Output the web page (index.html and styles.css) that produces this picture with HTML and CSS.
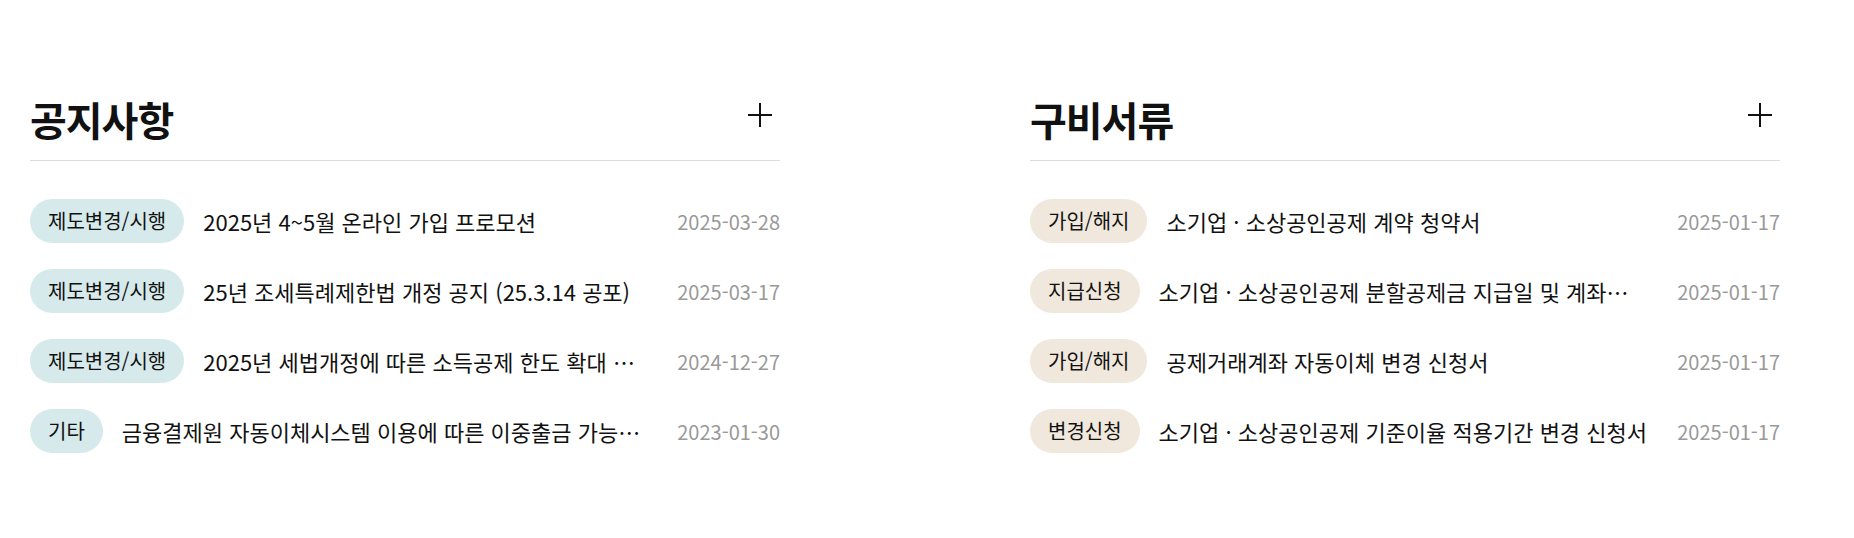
FILE: index.html
```html
<!DOCTYPE html>
<html lang="ko">

<head>
    <meta charset="UTF-8">
    <meta name="viewport" content="width=device-width, initial-scale=1.0">
    <title>공지사항 / 구비서류</title>
    <link rel="stylesheet" href="styles.css">
</head>

<body>
    <div class="board">
        <!-- 공지사항 -->
        <section class="panel">
            <div class="panel-head">
                <h2>공지사항</h2>
                <a href="#" class="more" aria-label="더보기">
                    <svg width="24" height="24" viewBox="0 0 24 24"><path d="M12 0v24M0 12h24" stroke="#111" stroke-width="2" fill="none"/></svg>
                </a>
            </div>
            <ul class="list">
                <li class="item">
                    <span class="tag tag-blue">제도변경/시행</span>
                    <a href="#" class="subject">2025년 4~5월 온라인 가입 프로모션</a>
                    <span class="date">2025-03-28</span>
                </li>
                <li class="item">
                    <span class="tag tag-blue">제도변경/시행</span>
                    <a href="#" class="subject">25년 조세특례제한법 개정 공지 (25.3.14 공포)</a>
                    <span class="date">2025-03-17</span>
                </li>
                <li class="item">
                    <span class="tag tag-blue">제도변경/시행</span>
                    <a href="#" class="subject">2025년 세법개정에 따른 소득공제 한도 확대 안내 및 적용 기준</a>
                    <span class="date">2024-12-27</span>
                </li>
                <li class="item">
                    <span class="tag tag-blue">기타</span>
                    <a href="#" class="subject">금융결제원 자동이체시스템 이용에 따른 이중출금 가능성 안내</a>
                    <span class="date">2023-01-30</span>
                </li>
            </ul>
        </section>

        <!-- 구비서류 -->
        <section class="panel">
            <div class="panel-head">
                <h2>구비서류</h2>
                <a href="#" class="more" aria-label="더보기">
                    <svg width="24" height="24" viewBox="0 0 24 24"><path d="M12 0v24M0 12h24" stroke="#111" stroke-width="2" fill="none"/></svg>
                </a>
            </div>
            <ul class="list">
                <li class="item">
                    <span class="tag tag-beige">가입/해지</span>
                    <a href="#" class="subject">소기업 · 소상공인공제 계약 청약서</a>
                    <span class="date">2025-01-17</span>
                </li>
                <li class="item">
                    <span class="tag tag-beige">지급신청</span>
                    <a href="#" class="subject">소기업 · 소상공인공제 분할공제금 지급일 및 계좌변경 신청서</a>
                    <span class="date">2025-01-17</span>
                </li>
                <li class="item">
                    <span class="tag tag-beige">가입/해지</span>
                    <a href="#" class="subject">공제거래계좌 자동이체 변경 신청서</a>
                    <span class="date">2025-01-17</span>
                </li>
                <li class="item">
                    <span class="tag tag-beige">변경신청</span>
                    <a href="#" class="subject">소기업 · 소상공인공제 기준이율 적용기간 변경 신청서</a>
                    <span class="date">2025-01-17</span>
                </li>
            </ul>
        </section>
    </div>
</body>

</html>
```

FILE: styles.css
```css
/* 기본 */
body {
    margin: 0;
    padding: 0;
    background-color: #ffffff;
    font-family: "Noto Sans CJK KR", "Noto Sans", sans-serif;
    color: #111;
}

a {
    color: inherit;
    text-decoration: none;
}

/* 두 칸 게시판 */
.board {
    display: flex;
    gap: 250px;
    padding: 93px 74px 0 30px;
}

.panel {
    width: 750px;
}

/* 제목 + 더보기 */
.panel-head {
    display: flex;
    justify-content: space-between;
    align-items: flex-start;
    padding-bottom: 15px;
    border-bottom: 1px solid #dddddd;
}

.panel-head h2 {
    margin: 0;
    font-size: 40px;
    line-height: 52px;
    font-weight: 700;
    letter-spacing: -1px;
}

.more {
    display: flex;
    align-items: center;
    justify-content: center;
    width: 40px;
    height: 40px;
    margin-top: 2px;
}

/* 목록 */
.list {
    list-style: none;
    margin: 0;
    padding: 38px 0 0;
    display: flex;
    flex-direction: column;
    gap: 26px;
}

.item {
    display: flex;
    align-items: center;
    height: 44px;
}

.tag {
    flex-shrink: 0;
    height: 44px;
    line-height: 44px;
    padding: 0 18px;
    border-radius: 22px;
    font-size: 20px;
}

.tag-blue {
    background-color: #d6eaeb;
}

.tag-beige {
    background-color: #f0e8dc;
}

.subject {
    flex: 1;
    min-width: 0;
    margin-left: 19px;
    font-size: 22px;
    white-space: nowrap;
    overflow: hidden;
    text-overflow: ellipsis;
}

.date {
    flex-shrink: 0;
    margin-left: 30px;
    font-size: 20px;
    color: #999999;
}
```
